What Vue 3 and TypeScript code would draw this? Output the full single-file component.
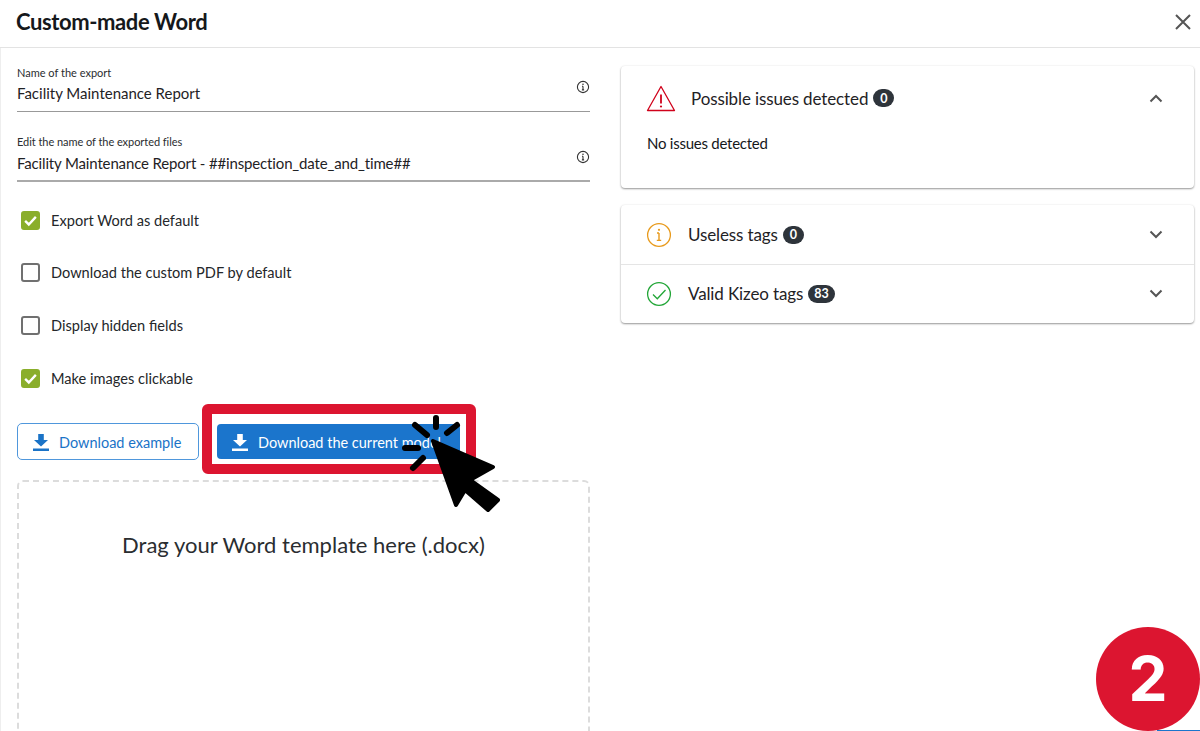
<script setup lang="ts">
interface Check { label: string; checked: boolean }
interface Field { label: string; value: string }
interface Row { title: string; count: number; kind: 'info' | 'ok' }

const fields: Field[] = [
  { label: 'Name of the export', value: 'Facility Maintenance Report' },
  { label: 'Edit the name of the exported files', value: 'Facility Maintenance Report - ##inspection_date_and_time##' },
]
const checks: Check[] = [
  { label: 'Export Word as default', checked: true },
  { label: 'Download the custom PDF by default', checked: false },
  { label: 'Display hidden fields', checked: false },
  { label: 'Make images clickable', checked: true },
]
const rows: Row[] = [
  { title: 'Useless tags', count: 0, kind: 'info' },
  { title: 'Valid Kizeo tags', count: 83, kind: 'ok' },
]
</script>

<template>
  <div class="page">
    <header class="top">
      <h1>Custom-made Word</h1>
      <svg class="close" width="18" height="18" viewBox="0 0 18 18"><path d="M2 2l14 14M16 2L2 16" stroke="#555" stroke-width="2" fill="none"/></svg>
    </header>
    <main class="body">
      <section class="left">
        <div v-for="(f, i) in fields" :key="f.label" class="field" :class="{ second: i === 1 }">
          <div class="field-label">{{ f.label }}</div>
          <div class="field-value">{{ f.value }}</div>
          <svg class="field-info" width="14" height="14" viewBox="0 0 14 14"><circle cx="7" cy="7" r="5.6" fill="none" stroke="#333" stroke-width="1.1"/><path d="M7 6.2v3.6M5.9 9.9h2.2M6 6.2h1" stroke="#333" stroke-width="1.1" fill="none"/><circle cx="7" cy="4.2" r=".8" fill="#333"/></svg>
        </div>
        <div class="checks">
          <label v-for="c in checks" :key="c.label" class="check">
            <span class="box" :class="{ on: c.checked }">
              <svg v-if="c.checked" width="15" height="15" viewBox="0 0 14 14"><path d="M2 7.4l3.4 3.3L12 3.6" stroke="#fff" stroke-width="2.2" fill="none"/></svg>
            </span>
            <span>{{ c.label }}</span>
          </label>
        </div>
        <div class="actions">
          <button class="btn outline">
            <svg width="16" height="18" viewBox="0 0 16 18"><path d="M5.2 1h5.6v6H15l-7 6.6L1 7h4.2zM0 15.6h16V18H0z" fill="currentColor"/></svg>
            <span>Download example</span>
          </button>
          <div class="highlight">
            <button class="btn solid">
              <svg width="16" height="18" viewBox="0 0 16 18"><path d="M5.2 1h5.6v6H15l-7 6.6L1 7h4.2zM0 15.6h16V18H0z" fill="currentColor"/></svg>
              <span>Download the current model</span>
            </button>
          </div>
          <svg class="cursor" width="105" height="105" viewBox="0 0 105 105">
            <path d="M33 31L93 57L70 70L98 90L88 100L65 80L56 95Z" fill="#000" stroke="#000" stroke-width="4" stroke-linejoin="round"/>
            <path d="M36 8v9M57 15l-10 8M15 15l12 10M5 38h13M13 58l10-10" stroke="#000" stroke-width="6" stroke-linecap="round" fill="none"/>
          </svg>
        </div>
        <div class="drop">Drag your Word template here (.docx)</div>
      </section>
      <section class="right">
        <div class="card issues">
          <div class="issues-head">
            <svg class="warn" width="30" height="27" viewBox="0 0 30 27"><path d="M15 1.5L1.5 25.5h27z" fill="none" stroke="#d0021b" stroke-width="1.3" stroke-linejoin="round"/><path d="M15 9.5v9" stroke="#d0021b" stroke-width="1.8"/><circle cx="15" cy="21.5" r="1.1" fill="#d0021b"/></svg>
            <span class="title">Possible issues detected</span>
            <span class="pill">0</span>
            <svg class="chev" width="14" height="9" viewBox="0 0 14 9"><path d="M1.5 7.5L7 2l5.5 5.5" stroke="#555" stroke-width="2" fill="none"/></svg>
          </div>
          <p class="none">No issues detected</p>
        </div>
        <div class="card list">
          <div v-for="r in rows" :key="r.title" class="row">
            <svg v-if="r.kind === 'info'" width="26" height="26" viewBox="0 0 26 26"><circle cx="13" cy="13" r="11.4" fill="none" stroke="#e89a1c" stroke-width="1.3"/><path d="M13 11v7.2M10.8 18.4h4.4M11 11h2" stroke="#e89a1c" stroke-width="1.4" fill="none"/><circle cx="13" cy="7.8" r="1.1" fill="#e89a1c"/></svg>
            <svg v-else width="26" height="26" viewBox="0 0 26 26"><circle cx="13" cy="13" r="11.4" fill="none" stroke="#22a637" stroke-width="1.3"/><path d="M7 13.5l4.3 4.3L19.5 9" stroke="#22a637" stroke-width="1.3" fill="none"/></svg>
            <span class="title">{{ r.title }}</span>
            <span class="pill">{{ r.count }}</span>
            <svg class="chev" width="14" height="9" viewBox="0 0 14 9"><path d="M1.5 1.5L7 7l5.5-5.5" stroke="#555" stroke-width="2" fill="none"/></svg>
          </div>
        </div>
      </section>
    </main>
    <div class="step">2</div>
    <div class="edge"></div>
  </div>
</template>

<style>
html, body { margin: 0; background: #fff; }
</style>

<style scoped>
.page {
  position: relative;
  width: 1200px;
  height: 731px;
  overflow: hidden;
  background: #fff;
  font-family: Lato, "Liberation Sans", sans-serif;
  color: #1f2225;
}
.top {
  height: 48px;
  box-sizing: border-box;
  border-bottom: 1px solid #e3e3e3;
  display: flex;
  align-items: center;
  justify-content: space-between;
  padding: 0 8px 4px 16px;
}
h1 {
  margin: 0;
  font-size: 22px;
  letter-spacing: -0.4px;
  font-weight: 700;
  color: #15181b;
}
.body {
  display: grid;
  grid-template-columns: 573px 573px;
  column-gap: 31px;
  padding-left: 17px;
  box-shadow: inset 1px 0 0 #eee;
}
.left { display: flex; flex-direction: column; }
.field {
  position: relative;
  height: 64px;
  padding-top: 18px;
  box-sizing: border-box;
  border-bottom: 1px solid #999;
}
.field.second {
  margin-top: 5px;
  height: 65px;
  border-bottom: 2px solid #aaa;
}
.field-label { font-size: 11px; line-height: 13px; color: #2a2d30; }
.field-value { font-size: 15px; line-height: 20px; margin-top: 4px; color: #1f2225; }
.second .field-label { letter-spacing: -0.05px; }
.second .field-value { margin-top: 5px; letter-spacing: -0.15px; }
.field-info { position: absolute; right: 0; top: 32px; }
.second .field-info { top: 33px; }
.checks {
  display: flex;
  flex-direction: column;
  gap: 34.6px;
  margin-top: 29.4px;
}
.check {
  display: flex;
  align-items: center;
  gap: 11px;
  height: 18px;
  font-size: 14.6px;
  padding-left: 4px;
  color: #24272a;
}
.box {
  width: 19px;
  height: 19px;
  flex: none;
  box-sizing: border-box;
  border: 2px solid #707070;
  border-radius: 3px;
  display: flex;
  align-items: center;
  justify-content: center;
}
.box.on { background: #8aae2b; border-color: #8aae2b; }
.actions {
  position: relative;
  display: flex;
  align-items: center;
  margin-top: 17px;
  height: 70px;
}
.btn {
  display: flex;
  align-items: center;
  gap: 10px;
  font-family: inherit;
  font-size: 14.5px;
  box-sizing: border-box;
  border-radius: 4px;
  padding: 0 0 0 15px;
  margin: 0;
}
.btn span { padding-top: 2px; }
.btn.outline {
  width: 182px;
  height: 37px;
  background: #fff;
  color: #1a73c7;
  border: 1px solid #4f97dc;
  border-radius: 5px;
  margin-top: 5px;
}
.highlight {
  position: absolute;
  left: 185px;
  top: 0;
  width: 274px;
  height: 70px;
  box-sizing: border-box;
  border: 10px solid #dc1530;
  border-radius: 6px;
  padding: 10px 6px 5px 5px;
  background: #fff;
}
.btn.solid {
  width: 243px;
  height: 35px;
  background: #1b75cc;
  color: #fff;
  border: 0;
}
.cursor { position: absolute; left: 383px; top: 6px; }
.drop {
  margin-top: 6px;
  height: 300px;
  box-sizing: border-box;
  border: 2px dashed #dcdcdc;
  border-radius: 6px;
  text-align: center;
  padding-top: 49px;
  font-size: 22px;
  line-height: 28px;
  color: #2a2d30;
}
.right { padding-top: 18px; display: flex; flex-direction: column; gap: 17px; }
.card {
  background: #fff;
  border-radius: 4px;
  box-shadow: 0 1px 2px rgba(0, 0, 0, .4), 0 0 3px rgba(0, 0, 0, .05);
}
.issues { height: 122px; box-sizing: border-box; }
.issues-head {
  display: flex;
  align-items: center;
  height: 64px;
  padding-left: 25px;
}
.warn { margin-right: 15px; }
.title { font-size: 17px; letter-spacing: -0.12px; color: #1f2225; }
.pill {
  display: inline-flex;
  align-items: center;
  justify-content: center;
  height: 18px;
  min-width: 21px;
  padding: 0 6px;
  box-sizing: border-box;
  margin-left: 5px;
  border-radius: 9px;
  background: #2e343b;
  color: #fff;
  font-size: 12.5px;
  font-weight: 700;
}
.chev { margin-left: auto; margin-right: 31px; }
.none { margin: 0; padding: 3px 0 0 26px; font-size: 15px; letter-spacing: -0.25px; line-height: 20px; color: #15181b; }
.list { height: 118px; }
.row {
  display: flex;
  align-items: center;
  height: 59px;
  box-sizing: border-box;
  padding-left: 25px;
  gap: 16px;
}
.row .pill { margin-left: -11px; }
.row + .row { border-top: 1px solid #e5e5e5; padding-bottom: 1px; }
.step {
  position: absolute;
  left: 1096px;
  top: 627px;
  width: 104px;
  height: 104px;
  border-radius: 50%;
  background: #dc1530;
  color: #fff;
  display: flex;
  align-items: center;
  justify-content: center;
  font-family: Inter, sans-serif;
  font-size: 62px;
  font-weight: 700;
  line-height: 1;
}
.edge {
  position: absolute;
  left: 1157px;
  right: 0;
  bottom: 0;
  height: 1px;
  background: #1b75cc;
}
</style>
